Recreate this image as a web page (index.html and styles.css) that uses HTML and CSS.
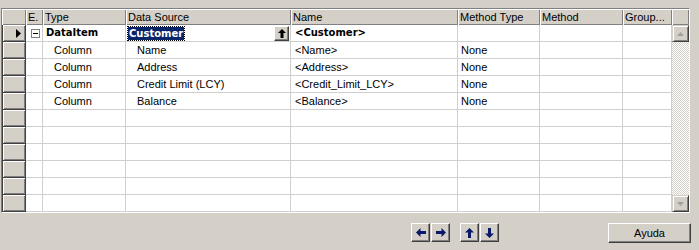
FILE: index.html
```html
<!DOCTYPE html>
<html>
<head>
<meta charset="utf-8">
<link rel="stylesheet" href="styles.css">
</head>
<body>
<div class="grid">
  <div class="table">
    <div class="row head">
      <div class="h"></div>
      <div class="h">E.</div>
      <div class="h">Type</div>
      <div class="h">Data Source</div>
      <div class="h">Name</div>
      <div class="h">Method Type</div>
      <div class="h">Method</div>
      <div class="h">Group...</div>
    </div>
    <div class="row">
      <div class="rh"><svg class="ptr" width="5" height="9" viewBox="0 0 5 9"><polygon points="0,0 5,4.5 0,9" fill="#000"/></svg></div>
      <div class="c e"><span class="minus"></span></div>
      <div class="c b">DataItem</div>
      <div class="c ds"><span class="hl">Customer</span><span class="upbtn"><svg width="8" height="9" viewBox="0 0 8 9"><polygon points="4,0 8,4 5.5,4 5.5,9 2.5,9 2.5,4 0,4" fill="#000"/></svg></span></div>
      <div class="c b nm">&lt;Customer&gt;</div>
      <div class="c"></div>
      <div class="c"></div>
      <div class="c"></div>
    </div>
    <div class="row">
      <div class="rh"></div>
      <div class="c e"></div>
      <div class="c in">Column</div>
      <div class="c in">Name</div>
      <div class="c nm">&lt;Name&gt;</div>
      <div class="c">None</div>
      <div class="c"></div>
      <div class="c"></div>
    </div>
    <div class="row">
      <div class="rh"></div>
      <div class="c e"></div>
      <div class="c in">Column</div>
      <div class="c in">Address</div>
      <div class="c nm">&lt;Address&gt;</div>
      <div class="c">None</div>
      <div class="c"></div>
      <div class="c"></div>
    </div>
    <div class="row">
      <div class="rh"></div>
      <div class="c e"></div>
      <div class="c in">Column</div>
      <div class="c in">Credit Limit (LCY)</div>
      <div class="c nm">&lt;Credit_Limit_LCY&gt;</div>
      <div class="c">None</div>
      <div class="c"></div>
      <div class="c"></div>
    </div>
    <div class="row">
      <div class="rh"></div>
      <div class="c e"></div>
      <div class="c in">Column</div>
      <div class="c in">Balance</div>
      <div class="c nm">&lt;Balance&gt;</div>
      <div class="c">None</div>
      <div class="c"></div>
      <div class="c"></div>
    </div>
    <div class="row"><div class="rh"></div><div class="c"></div><div class="c"></div><div class="c"></div><div class="c"></div><div class="c"></div><div class="c"></div><div class="c"></div></div>
    <div class="row"><div class="rh"></div><div class="c"></div><div class="c"></div><div class="c"></div><div class="c"></div><div class="c"></div><div class="c"></div><div class="c"></div></div>
    <div class="row"><div class="rh"></div><div class="c"></div><div class="c"></div><div class="c"></div><div class="c"></div><div class="c"></div><div class="c"></div><div class="c"></div></div>
    <div class="row"><div class="rh"></div><div class="c"></div><div class="c"></div><div class="c"></div><div class="c"></div><div class="c"></div><div class="c"></div><div class="c"></div></div>
    <div class="row"><div class="rh"></div><div class="c"></div><div class="c"></div><div class="c"></div><div class="c"></div><div class="c"></div><div class="c"></div><div class="c"></div></div>
    <div class="row"><div class="rh"></div><div class="c"></div><div class="c"></div><div class="c"></div><div class="c"></div><div class="c"></div><div class="c"></div><div class="c"></div></div>
  </div>
  <div class="vscroll">
    <div class="corner"></div>
    <div class="sbtn"><svg width="7" height="4" viewBox="0 0 7 4"><polygon points="3.5,0 7,4 0,4" fill="#a0a0a0"/></svg></div>
    <div class="track"></div>
    <div class="sbtn"><svg width="7" height="4" viewBox="0 0 7 4"><polygon points="0,0 7,0 3.5,4" fill="#a0a0a0"/></svg></div>
  </div>
</div>
<div class="toolbar">
  <div class="grp">
    <button class="abtn"><svg width="10" height="9" viewBox="0 0 10 9"><polygon points="0,4.5 4.5,0 4.5,3 10,3 10,6 4.5,6 4.5,9" fill="#0a1a6a"/></svg></button>
    <button class="abtn"><svg width="10" height="9" viewBox="0 0 10 9"><polygon points="10,4.5 5.5,0 5.5,3 0,3 0,6 5.5,6 5.5,9" fill="#0a1a6a"/></svg></button>
  </div>
  <div class="grp">
    <button class="abtn"><svg width="9" height="10" viewBox="0 0 9 10"><polygon points="4.5,0 9,4.5 6,4.5 6,10 3,10 3,4.5 0,4.5" fill="#0a1a6a"/></svg></button>
    <button class="abtn"><svg width="9" height="10" viewBox="0 0 9 10"><polygon points="4.5,10 9,5.5 6,5.5 6,0 3,0 3,5.5 0,5.5" fill="#0a1a6a"/></svg></button>
  </div>
  <button class="help">Ayuda</button>
</div>
</body>
</html>
```
FILE: styles.css
```css
html, body {
  margin: 0;
  padding: 0;
  background: #d4d0c8;
  font-family: "Liberation Sans", Arial, sans-serif;
  font-size: 11px;
  color: #000;
}
body {
  width: 699px;
  height: 250px;
  overflow: hidden;
}
.grid {
  margin: 8px 0 0 1px;
  width: 687px;
  height: 203px;
  border-style: solid;
  border-width: 1px;
  border-color: #808080 #ffffff #ffffff #808080;
  display: flex;
  background: #fff;
}
.table {
  width: 670px;
  display: flex;
  flex-direction: column;
}
.row {
  display: grid;
  grid-template-columns: 24px 17px 83px 165px 167px 82px 83px 49px;
  height: 17px;
}
.row.head {
  height: 16px;
}
.h {
  box-sizing: border-box;
  height: 16px;
  line-height: 16px;
  padding-left: 2px;
  background: #d4d0c8;
  box-shadow: inset 1px 1px #ffffff, inset -1px -1px #808080;
  white-space: nowrap;
  overflow: hidden;
}
.rh {
  box-sizing: border-box;
  height: 17px;
  background: #d4d0c8;
  border-left: 1px solid #404040;
  border-right: 1px solid #404040;
  border-bottom: 1px solid #404040;
  box-shadow: inset 1px 1px #ffffff, inset -1px -1px #808080;
  display: flex;
  align-items: center;
  justify-content: flex-end;
  padding-right: 4px;
}
.c {
  box-sizing: border-box;
  height: 17px;
  line-height: 16px;
  padding-left: 3px;
  border-right: 1px solid #cfcfcf;
  border-bottom: 1px solid #cfcfcf;
  white-space: nowrap;
  overflow: hidden;
}
.c.in {
  padding-left: 11px;
}
.c.nm {
  padding-left: 4px;
}
.c.b {
  font-family: "DejaVu Sans", sans-serif;
  font-weight: bold;
  font-size: 10px;
}
.c.e {
  display: flex;
  align-items: center;
  padding-left: 5px;
}
.minus {
  box-sizing: border-box;
  width: 9px;
  height: 9px;
  border: 1px solid #808080;
  background: linear-gradient(#000, #000) center / 5px 1px no-repeat, #fff;
}
.c.ds {
  display: flex;
  align-items: center;
  justify-content: space-between;
  padding-left: 2px;
  padding-right: 1px;
}
.hl {
  font-family: "DejaVu Sans", sans-serif;
  font-weight: bold;
  font-size: 10px;
  line-height: 13px;
  background: #0a246a;
  color: #fff;
  padding: 0 1px 0 1px;
  outline: 1px dotted #000;
}
.upbtn {
  box-sizing: border-box;
  width: 15px;
  height: 15px;
  background: #d4d0c8;
  border-style: solid;
  border-width: 1px;
  border-color: #ffffff #404040 #404040 #ffffff;
  box-shadow: inset -1px -1px #808080;
  display: flex;
  align-items: center;
  justify-content: center;
}
.vscroll {
  width: 17px;
  display: flex;
  flex-direction: column;
}
.corner {
  height: 16px;
  background: #d4d0c8;
  box-shadow: inset 1px 1px #ffffff, inset -1px -1px #808080;
}
.sbtn {
  box-sizing: border-box;
  height: 17px;
  background: #d4d0c8;
  border-style: solid;
  border-width: 1px;
  border-color: #d4d0c8 #404040 #404040 #d4d0c8;
  box-shadow: inset 1px 1px #ffffff, inset -1px -1px #808080;
  display: flex;
  align-items: center;
  justify-content: center;
}
.track {
  flex: 1;
  background: repeating-conic-gradient(#ffffff 0 25%, #d4d0c8 0 50%) 0 0 / 2px 2px;
}
.toolbar {
  display: flex;
  align-items: flex-start;
  margin-top: 10px;
  padding-left: 411px;
}
.grp {
  display: flex;
  gap: 1px;
  margin-right: 10px;
}
.abtn, .help {
  box-sizing: border-box;
  background: #d4d0c8;
  border-style: solid;
  border-width: 1px;
  border-color: #ffffff #404040 #404040 #ffffff;
  box-shadow: inset -1px -1px #808080;
  padding: 0;
  margin: 0;
  display: flex;
  align-items: center;
  justify-content: center;
  font-family: "Liberation Sans", Arial, sans-serif;
  font-size: 11px;
  color: #000;
}
.abtn {
  width: 19px;
  height: 19px;
}
.help {
  width: 83px;
  height: 20px;
  margin-left: 99px;
}
```
